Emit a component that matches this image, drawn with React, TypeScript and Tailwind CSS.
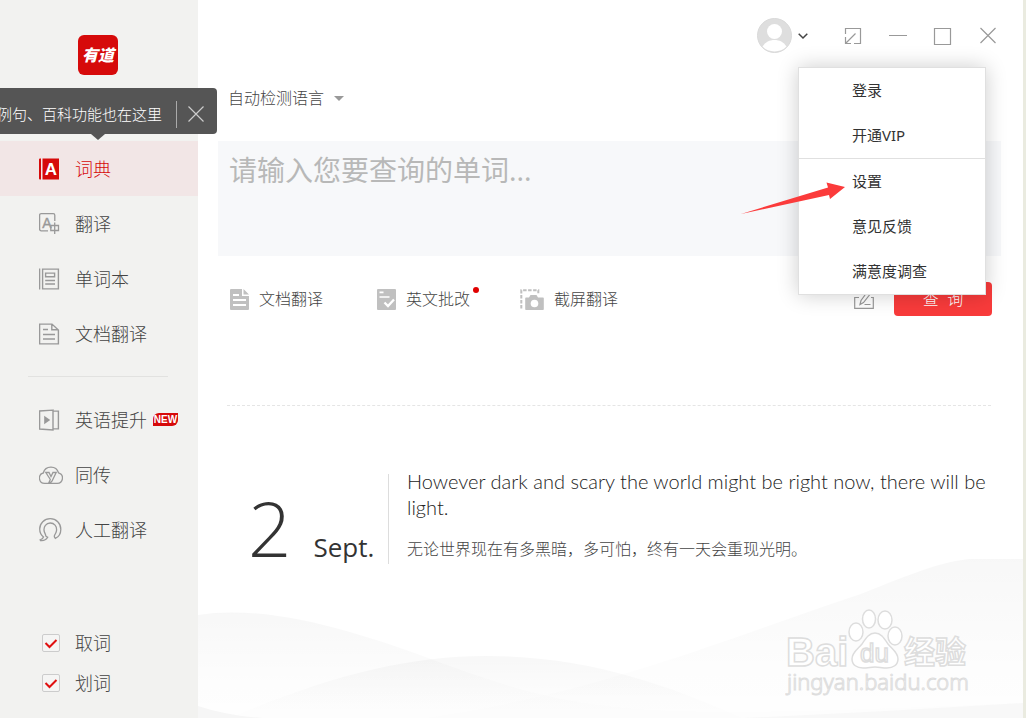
import React, { useState } from 'react';
import { clsx } from 'clsx';

type IconName = 'dict' | 'translate' | 'words' | 'doc' | 'video' | 'cloud' | 'human';

interface NavEntry {
  icon: IconName;
  label: string;
  isNew?: boolean;
}

const mainNav: NavEntry[] = [
  { icon: 'dict', label: '词典' },
  { icon: 'translate', label: '翻译' },
  { icon: 'words', label: '单词本' },
  { icon: 'doc', label: '文档翻译' },
];

const extraNav: NavEntry[] = [
  { icon: 'video', label: '英语提升', isNew: true },
  { icon: 'cloud', label: '同传' },
  { icon: 'human', label: '人工翻译' },
];

const menuGroups = [
  ['登录', '开通VIP'],
  ['设置', '意见反馈', '满意度调查'],
];

const NavIcon: React.FC<{ name: IconName }> = ({ name }) => {
  const common = {
    viewBox: '0 0 24 24',
    className: 'h-6 w-6 shrink-0',
    fill: 'none',
    stroke: '#999',
    strokeWidth: 1.3,
    'aria-hidden': true,
  };

  switch (name) {
    case 'dict':
      return (
        <svg {...common} stroke="none">
          <path d="M2 1.5v21H1a1 1 0 0 1-1-1v-19a1 1 0 0 1 1-1z" fill="#d60a0a" />
          <path d="M3.500 1.500H20v21H3.500z" fill="#d60a0a" />
          <text x="12" y="18" textAnchor="middle" fontSize="17" fontWeight="700" fontFamily="Liberation Sans, sans-serif" fill="#fff">A</text>
        </svg>
      );
    case 'translate':
      return (
        <svg {...common}>
          <path d="M9 18.8H2.2A1.6 1.6 0 0 1 .6 17.2V3.2A1.6 1.6 0 0 1 2.2 1.6h12a1.6 1.6 0 0 1 1.6 1.6V9" />
          <text x="8" y="15.5" textAnchor="middle" fontSize="14" fontFamily="Liberation Sans, sans-serif" fill="#999" stroke="#999" strokeWidth="0.4">A</text>
          <path d="M11.8 13.5h7.7v5h-7.7zM15.7 10.5V22" />
        </svg>
      );
    case 'words':
      return (
        <svg {...common} strokeWidth="1.4">
          <path d="M.6 1.5v21M3.6 2.1h15.8v19.8H3.600zM6.600 6.100h9v3.700h-9zM6.200 13.500h9.800M6.200 17h9.800" />
        </svg>
      );
    case 'doc':
      return (
        <svg {...common} strokeWidth="1.4">
          <path d="M13 2.100H.6v19.800h18.800V8zM12.800 2.100v5.700h6.600M4 7.500h5M4 12.500h12M4 17h12" />
        </svg>
      );
    case 'video':
      return (
        <svg {...common} strokeWidth="1.4">
          <path d="M14 2.100.6 3v18l13.400.9zM14 3.100h5.400v17.800H14" />
          <path d="m5.200 7.700 6 4.300-6 4.300z" fill="#999" stroke="none" />
        </svg>
      );
    case 'cloud':
      return (
        <svg {...common}>
          <path d="M5.600 20.400A5.300 5.300 0 0 1 4.300 10 7.900 7.900 0 0 1 19.500 9.800a5.400 5.400 0 0 1-1.200 10.600z" />
          <path d="M6.800 9.500h3.200l2 4 2-4h3.200l-4 8.200c-.6 1.400-1.400 2-3.200 1.800l1.300-3z" />
        </svg>
      );
    case 'human':
      return (
        <svg {...common}>
          <path d="M1.500 22.600c2.600.4 5.500-.6 7.200-3.400l-1.800-1c-.4-2.600-1.400-3.200-1.800-5.200C4.400 8.400 7.200 5 11.200 5s6.900 3.300 6.300 7.700c-.3 2.300-1.300 3.100-2 4.700-.4 1 0 2.200.8 3 3.500-1.700 5.500-4.900 5.500-9A10.500 10.500 0 0 0 11.200.7C5.300.7.7 5.200.7 11c0 3.200 1.400 6.100 3.800 8-.6 1.600-1.600 2.400-3.300 2.800z" />
        </svg>
      );
  }
};

const NavItem: React.FC<{ entry: NavEntry; active: boolean; onSelect: () => void }> = ({ entry, active, onSelect }) => (
  <li>
    <button
      type="button"
      onClick={onSelect}
      className={clsx(
        'flex h-[55px] w-full items-center gap-3 pl-[39px] text-lg',
        active ? 'bg-[#f2e6e6] text-[#d60a0a]' : 'text-[#444]'
      )}
    >
      <NavIcon name={entry.icon} />
      <span className="flex items-center gap-[6px] whitespace-nowrap">
        {entry.label}
        {entry.isNew && (
          <span className="flex h-[13px] w-[25px] items-center justify-center rounded-tl-md rounded-br-md bg-[#d60a0a] font-['Liberation_Sans',sans-serif] text-[10px] leading-none font-bold text-white">
            NEW
          </span>
        )}
      </span>
    </button>
  </li>
);

const CheckOption: React.FC<{ label: string }> = ({ label }) => (
  <label className="flex h-10 items-center gap-[15px] pl-[42px] text-lg text-[#444]">
    <span className="relative h-[18px] w-[18px]">
      <input
        type="checkbox"
        defaultChecked
        className="peer block h-[18px] w-[18px] appearance-none rounded-xs border border-[#ccc] bg-[#f5f5f4]"
      />
      <svg viewBox="0 0 18 18" className="pointer-events-none absolute inset-0 hidden peer-checked:block" aria-hidden="true">
        <path d="m3.5 9 4 4 7-7" fill="none" stroke="#e01010" strokeWidth="2" />
      </svg>
    </span>
    {label}
  </label>
);

const Sidebar: React.FC = () => {
  const [active, setActive] = useState('词典');
  const [showTip, setShowTip] = useState(true);

  return (
    <aside className="relative flex w-[198px] shrink-0 flex-col bg-[#f2f2f0]">
      <div className="h-[141px] pt-[35px] pl-[78px]">
        <div className="flex h-10 w-10 items-center justify-center rounded-md bg-[#d60a0a] text-base font-black text-white italic">
          有道
        </div>
      </div>

      {showTip && (
        <div className="absolute top-[88px] left-0 z-10 w-[217px]">
          <div className="flex h-[46px] items-center justify-end overflow-hidden rounded-r bg-[#555] pt-[6px] pr-[13px] text-[15px] text-white">
            <span className="whitespace-nowrap">例句、百科功能也在这里</span>
            <span className="ml-[14px] h-[27px] w-px shrink-0 bg-[#aaa]" />
            <button type="button" aria-label="关闭提示" onClick={() => setShowTip(false)} className="ml-[11px] shrink-0">
              <svg viewBox="0 0 16 16" className="h-4 w-4" stroke="#ccc" strokeWidth="1.2" aria-hidden="true">
                <path d="m.5.5 15 15M15.500.5l-15 15" />
              </svg>
            </button>
          </div>
          <svg viewBox="0 0 14 6" className="ml-[91px] h-[6px] w-[14px]" aria-hidden="true">
            <path d="M0 0h14L7 6z" fill="#555" />
          </svg>
        </div>
      )}

      <nav>
        <ul>
          {mainNav.map((entry) => (
            <NavItem key={entry.label} entry={entry} active={active === entry.label} onSelect={() => setActive(entry.label)} />
          ))}
        </ul>
        <hr className="mt-[15px] mr-[30px] mb-[15px] ml-7 border-[#e2e2e0]" />
        <ul>
          {extraNav.map((entry) => (
            <NavItem key={entry.label} entry={entry} active={active === entry.label} onSelect={() => setActive(entry.label)} />
          ))}
        </ul>
      </nav>

      <div className="mt-auto pb-[15px]">
        <CheckOption label="取词" />
        <CheckOption label="划词" />
      </div>
    </aside>
  );
};

const AccountMenu: React.FC = () => (
  <div className="absolute top-full left-[41px] z-20 mt-[14px]">
    <div className="w-[188px] border border-[#e0e0e0] bg-white shadow-[0_0_20px_rgba(0,0,0,0.2)]">
      {menuGroups.map((group, i) => (
        <ul key={group[0]} className={clsx(i > 0 && 'border-t border-[#e0e0e0]')}>
          {group.map((item) => (
            <li key={item}>
              <button type="button" className="flex h-[45px] w-full items-center pl-[53px] text-[15px] font-normal text-[#333]">
                {item}
              </button>
            </li>
          ))}
        </ul>
      ))}
    </div>
    <svg viewBox="0 0 106 34" className="pointer-events-none absolute top-[114px] right-[140px] h-[34px] w-[106px]" aria-hidden="true">
      <path d="M1 33 88 6.5 86.500 1.500 105 6 90 18l-1-4z" fill="#fb3b3b" />
    </svg>
  </div>
);

const TitleBar: React.FC = () => {
  const [open, setOpen] = useState(true);

  return (
    <header className="flex h-[72px] items-start justify-end pt-[18px] pr-[25px]">
      <div className="relative">
        <button type="button" aria-label="账户" onClick={() => setOpen(!open)} className="flex h-[35px] items-center gap-[6px]">
          <svg viewBox="0 0 35 35" className="h-[35px] w-[35px]" aria-hidden="true">
            <circle cx="17.5" cy="17.5" r="17" fill="#dedede" stroke="#d9d9d9" />
            <circle cx="17.5" cy="13.5" r="7.5" fill="#fff" />
            <path d="M5.500 28.500c3-4.500 7-6.500 12-6.500s9 2 12 6.500c-6 6.500-18 6.500-24 0z" fill="#fff" />
          </svg>
          <svg viewBox="0 0 10 10" className="h-[10px] w-[10px]" fill="none" stroke="#444" strokeWidth="1.500" aria-hidden="true">
            <path d="m.7 2.700 4.300 4.300 4.300-4.300" />
          </svg>
        </button>
        {open && <AccountMenu />}
      </div>

      <div className="ml-[35px] flex h-[35px] items-center gap-[25px] text-[#999]">
        <button type="button" aria-label="迷你窗口">
          <svg viewBox="0 0 20 20" className="h-5 w-5" fill="none" stroke="currentColor" strokeWidth="1.2" aria-hidden="true">
            <path d="M2.500 8V2.500h15v15H11M2.500 11v6.500H8M3 17l9.500-9.500" />
          </svg>
        </button>
        <button type="button" aria-label="最小化">
          <svg viewBox="0 0 20 20" className="h-5 w-5" stroke="currentColor" aria-hidden="true">
            <path d="M1 9.500h18" />
          </svg>
        </button>
        <button type="button" aria-label="最大化">
          <svg viewBox="0 0 20 20" className="h-5 w-5" fill="none" stroke="currentColor" strokeWidth="1.2" aria-hidden="true">
            <path d="M1.500 2.500h16v16h-16z" />
          </svg>
        </button>
        <button type="button" aria-label="关闭">
          <svg viewBox="0 0 20 20" className="h-5 w-5" stroke="currentColor" strokeWidth="1.2" aria-hidden="true">
            <path d="m2.500 2 15 15M17.500 2l-15 15" />
          </svg>
        </button>
      </div>
    </header>
  );
};

const Toolbar: React.FC = () => (
  <div className="mt-[26px] flex h-[34px] items-center pr-[31px] pl-8 text-base text-[#444]">
    <button type="button" className="flex items-center gap-[10px] whitespace-nowrap">
      <svg viewBox="0 0 19 21" className="h-[21px] w-[19px]" aria-hidden="true">
        <path d="M1 0h11v7h7v13a1 1 0 0 1-1 1H1a1 1 0 0 1-1-1V1a1 1 0 0 1 1-1zM13.500 0 19 5.500h-5.500z" fill="#c0c0c0" />
        <path d="M3 6h6M3 11h13M3 16h13" stroke="#fff" strokeWidth="1.8" />
      </svg>
      文档翻译
    </button>
    <button type="button" className="ml-[54px] flex items-center gap-[10px] whitespace-nowrap">
      <svg viewBox="0 0 19 21" className="h-[21px] w-[19px]" aria-hidden="true">
        <rect width="19" height="21" rx="1" fill="#c0c0c0" />
        <path d="M2.500 3.300h4M2.500 8h10" stroke="#fff" strokeWidth="1.7" />
        <path d="m7.500 13.500 3.500 3.500 6-6.500" fill="none" stroke="#fff" strokeWidth="2.300" />
      </svg>
      <span className="relative">
        英文批改
        <span className="absolute top-0 -right-[9px] h-1.5 w-1.5 rounded-full bg-[#e00000]" />
      </span>
    </button>
    <button type="button" className="ml-[50px] flex items-center gap-[10px] whitespace-nowrap">
      <svg viewBox="0 0 24 21" className="h-[21px] w-6" aria-hidden="true">
        <path d="M1.300 19.500V1.300h17v3" fill="none" stroke="#c0c0c0" strokeWidth="2" strokeDasharray="3.500 1.500" />
        <path d="M7 8.500h2l1.500-2.500h6L18 8.500h5a.8.8 0 0 1 .8.8v10.900a.8.8 0 0 1-.8.8H6a.8.8 0 0 1-.8-.8V9.300A.8.8 0 0 1 6 8.500z" fill="#c0c0c0" />
        <circle cx="14.500" cy="14.500" r="3.800" fill="#fff" />
      </svg>
      截屏翻译
    </button>

    <button type="button" aria-label="手写输入" className="mr-5 ml-auto">
      <svg viewBox="0 0 20 20" className="h-5 w-5" fill="none" stroke="#999" strokeWidth="1.2" aria-hidden="true">
        <path d="M5 8.500H.7v10.800h18.600V8.500H17M6 15.500l1-4L14 2l3 2-7.500 9.500zM10.500 15.500h6" />
      </svg>
    </button>
    <button type="submit" className="h-[34px] w-[98px] rounded bg-[#f83b3b] pb-px text-base whitespace-pre text-white">
      查  询
    </button>
  </div>
);

const DailyQuote: React.FC = () => (
  <section className="mt-[68px] flex pr-[31px] pl-[50px]">
    <div className="flex h-[90px] w-[141px] shrink-0 items-baseline gap-[22px] border-r border-[#ddd] font-['Open_Sans','Noto_Sans',sans-serif] text-[#333]">
      <span className="text-[76px] leading-[108px] font-light">2</span>
      <span className="text-[26px] font-normal">Sept.</span>
    </div>
    <div className="ml-[18px] flex-1">
      <p className="mt-[-6px] font-['Lato',sans-serif] text-xl leading-[26px] font-light text-[#222]">
        However dark and scary the world might be right now, there will be light.
      </p>
      <p className="mt-[17px] text-base text-[#444]">无论世界现在有多黑暗，多可怕，终有一天会重现光明。</p>
    </div>
  </section>
);

const Waves: React.FC = () => (
  <svg viewBox="0 0 825 160" preserveAspectRatio="none" className="pointer-events-none absolute inset-x-0 bottom-0 h-[160px] w-full" aria-hidden="true">
    <defs>
      <linearGradient id="fade" x1="0" y1="0" x2="0" y2="1">
        <stop offset="0" stopColor="#000" stopOpacity="0.03" />
        <stop offset="0.7" stopColor="#000" stopOpacity="0.008" />
        <stop offset="1" stopColor="#000" stopOpacity="0.004" />
      </linearGradient>
    </defs>
    <path d="M0 57C75 45 170 78 238 103s120 42 200 48 200 2 387-6v15H0z" fill="url(#fade)" />
    <path d="M32 160C130 118 210 98 288 98c100 0 180 28 256 62z" fill="url(#fade)" />
    <path d="M227 160C400 136 530 80 660 37 700 22 735 5 771 1h54v159z" fill="url(#fade)" />
    <path d="M0 148q30 10 65 12H0z" fill="#f6f6f6" />
    <path d="M544 160q140-6 281-15v15z" fill="#f8f8f8" />
  </svg>
);

const Watermark: React.FC = () => (
  <svg
    viewBox="0 0 190 92"
    className="pointer-events-none absolute right-12 bottom-[19px] h-[92px] w-[190px]"
    fill="#fff"
    stroke="#ddd"
    strokeWidth="1.5"
    aria-hidden="true"
  >
    <text x="1" y="59" fontSize="40" fontWeight="700" fontFamily="Liberation Sans, sans-serif">Bai</text>
    <path d="M90 26c6 0 9 5 13 11 4 5 10 8 10 15 0 6-5 9-11 9-5 0-8-1-12-1s-7 1-12 1c-6 0-11-3-11-9 0-7 6-10 10-15 4-6 7-11 13-11z" />
    <ellipse cx="71" cy="25" rx="7" ry="9" />
    <ellipse cx="84" cy="12" rx="6.5" ry="9" />
    <ellipse cx="100" cy="13" rx="7" ry="9" />
    <ellipse cx="110" cy="29" rx="7" ry="9" />
    <text x="75" y="55" fontSize="26" fontFamily="Liberation Sans, sans-serif">du</text>
    <text x="119" y="56" fontSize="31" fontWeight="700" fontFamily="Noto Sans CJK SC, sans-serif">经验</text>
    <text x="2" y="83" fontSize="22" fontFamily="Noto Sans, sans-serif" strokeWidth="1">jingyan.baidu.com</text>
  </svg>
);

export default function App() {
  return (
    <div className="flex min-h-screen bg-white font-['Noto_Sans','Noto_Sans_CJK_SC',sans-serif] font-light">
      <Sidebar />
      <main className="relative flex-1 border-r-[3px] border-[#eaebe0]">
        <Waves />
        <Watermark />
        <TitleBar />
        <form onSubmit={(e) => e.preventDefault()}>
          <div className="flex h-[69px] items-start pt-[14px] pl-[30px]">
            <div className="flex items-center">
              <select
                aria-label="语言"
                className="w-[106px] appearance-none bg-transparent text-base text-[#444]"
                defaultValue="auto"
              >
                <option value="auto">自动检测语言</option>
                <option value="en">英语</option>
              </select>
              <svg viewBox="0 0 10 5" className="h-[5px] w-[10px]" aria-hidden="true">
                <path d="M0 0h10L5 5z" fill="#999" />
              </svg>
            </div>
          </div>
          <div className="pr-[22px] pl-5">
            <textarea
              aria-label="查询内容"
              placeholder="请输入您要查询的单词..."
              className="block h-[115px] w-full resize-none bg-[#f7f8fa] px-[11px] pt-2 text-[28px] font-normal placeholder:text-[#b8b8b8] focus:outline-none"
            />
          </div>
          <Toolbar />
        </form>
        <hr className="mt-[89px] mr-8 ml-[29px] border-dashed border-[#e5e5e5]" />
        <DailyQuote />
      </main>
    </div>
  );
}
